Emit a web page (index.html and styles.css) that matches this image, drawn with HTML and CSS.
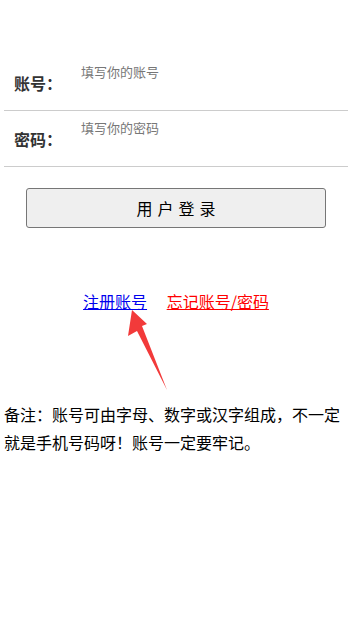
FILE: index.html
```html
<!DOCTYPE html>
<html lang="zh-CN">
<head>
    <meta charset="UTF-8">
    <meta name="viewport" content="width=device-width, initial-scale=1.0">
    <title>用户登录</title>
    <link rel="stylesheet" href="styles.css">
</head>
<body>
    <div class="container">
        <div class="form-row">
            <label for="account">账号：</label>
            <input type="text" id="account" placeholder="填写你的账号">
        </div>
        <div class="form-row">
            <label for="password">密码：</label>
            <input type="password" id="password" placeholder="填写你的密码">
        </div>
        <button class="login-btn">用户登录</button>

        <div class="links">
            <a href="#" class="link-reg">注册账号</a>
            <a href="#" class="link-forget">忘记账号/密码</a>
            <svg class="arrow" width="50" height="90" viewBox="0 0 50 90">
                <polygon points="8,0 23,14 18,16 43,80 13,21 4,26" fill="#f23a3a"/>
            </svg>
        </div>

        <p class="note">备注：账号可由字母、数字或汉字组成，不一定就是手机号码呀！账号一定要牢记。</p>
    </div>
</body>
</html>
```

FILE: styles.css
```css
body {
    font-family: 'Noto Sans CJK SC', 'Noto Sans', sans-serif;
    margin: 0;
    padding: 0;
    background-color: #fff;
    color: #000;
}
.container {
    margin: 0 6px 0 4px;
    padding-top: 55px;
}
.form-row {
    display: flex;
    align-items: center;
    height: 55px;
    border-bottom: 1px solid #ccc;
}
.form-row label {
    width: 77px;
    padding-left: 10px;
    box-sizing: border-box;
    font-size: 16px;
    font-weight: bold;
    color: #333;
}
.form-row input {
    align-self: flex-start;
    margin-top: 5px;
    flex: 1;
    height: 22px;
    border: none;
    outline: none;
    padding: 0;
    font-family: inherit;
    font-size: 13px;
    background: transparent;
}
.form-row input::placeholder {
    color: #777;
}
.login-btn {
    display: block;
    width: 300px;
    height: 40px;
    margin: 21px auto 0;
    background: #efefef;
    border: 1px solid #767676;
    border-radius: 3px;
    font-family: inherit;
    font-size: 16px;
    letter-spacing: 5px;
    text-indent: 5px;
    color: #000;
}
.links {
    position: relative;
    margin-top: 61px;
    text-align: center;
    font-size: 16px;
    line-height: 24px;
}
.links a {
    margin: 0 8px;
}
.link-reg {
    color: #0000ee;
}
.link-forget {
    color: #f00;
}
.arrow {
    position: absolute;
    left: 120px;
    top: 21px;
}
.note {
    margin: 87px 0 0;
    font-size: 16px;
    line-height: 28px;
}
```
